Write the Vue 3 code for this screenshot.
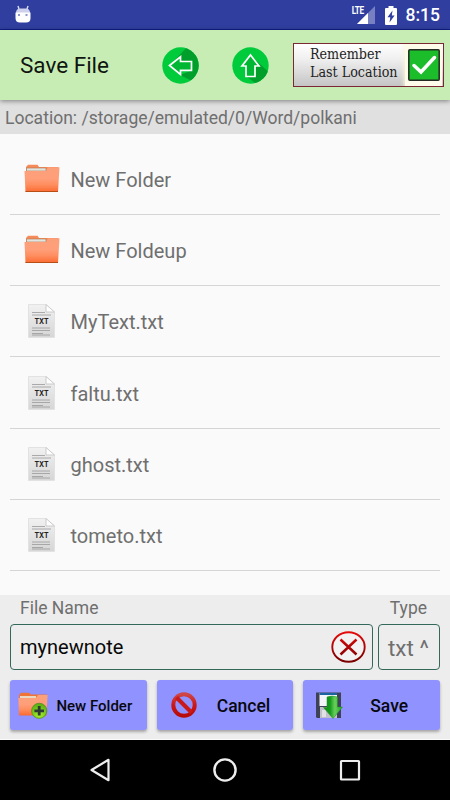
<script setup>
const files = [
  { name: 'New Folder', folder: true },
  { name: 'New Foldeup', folder: true },
  { name: 'MyText.txt' },
  { name: 'faltu.txt' },
  { name: 'ghost.txt' },
  { name: 'tometo.txt' }
]
</script>

<template>
  <div class="screen">
    <svg class="defs" width="0" height="0" aria-hidden="true">
      <defs>
        <linearGradient id="folderFill" x1="0" y1="0" x2="0" y2="1">
          <stop offset="0" stop-color="#fba07a" /><stop offset=".45" stop-color="#ff9f7a" />
          <stop offset=".7" stop-color="#ff8e60" /><stop offset="1" stop-color="#fb6a30" />
        </linearGradient>
        <linearGradient id="paper" x1="0" y1="0" x2="0" y2="1">
          <stop offset="0" stop-color="#f1f1f1" /><stop offset="1" stop-color="#d6d6d6" />
        </linearGradient>
        <linearGradient id="redRing" gradientUnits="userSpaceOnUse" x1="0" y1="1" x2="0" y2="31">
          <stop offset="0" stop-color="#e60a0a" /><stop offset="1" stop-color="#780000" />
        </linearGradient>
        <linearGradient id="banFill" x1="0" y1="0" x2="0" y2="1">
          <stop offset="0" stop-color="#cf4545" /><stop offset=".5" stop-color="#cc1717" /><stop offset="1" stop-color="#b80b0b" />
        </linearGradient>
        <linearGradient id="saveArrow" x1="0" y1="0" x2="1" y2="0">
          <stop offset="0" stop-color="#0c8a16" /><stop offset=".35" stop-color="#149b1c" />
          <stop offset=".6" stop-color="#69d05c" /><stop offset="1" stop-color="#18a51e" />
        </linearGradient>
        <radialGradient id="plusFill" cx=".5" cy=".8" r=".75">
          <stop offset="0" stop-color="#a6f02a" /><stop offset="1" stop-color="#59ae12" />
        </radialGradient>
        <clipPath id="disc"><circle cx="18.5" cy="18.5" r="18.2" /></clipPath>
      </defs>
    </svg>

    <header class="status">
      <svg class="droid" width="16" height="18" viewBox="0 0 16 18">
        <path d="M3 1 4 4M13 1 12 4" stroke="#d9dcf0" stroke-width="1.4" />
        <path d="M1 8Q1 3.5 5 3.5H11Q15 3.5 15 8Z" fill="#cdd1ec" />
        <path d="M.5 7.5H15.5V13Q15.5 17.5 11 17.5H5Q.5 17.5 .5 13Z" fill="#fff" />
        <path d="M3 9H5V11H3ZM10.500 9H12.500V11H10.500Z" fill="#8c95cc" />
      </svg>
      <div class="indicators">
        <span class="lte">LTE</span>
        <svg class="signal" width="18" height="18" viewBox="0 0 18 18">
          <path d="M0 18 18 0V18Z" fill="#7781c1" /><path d="M0 18 11 7V18Z" fill="#fff" />
        </svg>
        <svg class="battery" width="12" height="19" viewBox="0 0 12 19">
          <path d="M3.500 0H8.500V2H11Q12 2 12 3V18Q12 19 11 19H1Q0 19 0 18V3Q0 2 1 2H3.500Z" fill="#fff" />
          <path d="M7.500 4.500 2.500 11.200H5.300L4.500 16.500 9.600 9.500H6.800Z" fill="#303f9f" />
        </svg>
        <span class="clock">8:15</span>
      </div>
    </header>

    <div class="appbar">
      <h1>Save File</h1>
      <svg class="round back" width="37" height="37" viewBox="0 0 37 37">
        <circle cx="18.500" cy="18.500" r="18.200" fill="#00cb3b" />
        <path clip-path="url(#disc)" d="M10 16 26-1 45 10 30 34 18 28 29.500 23.500Z" fill="#009f2c" />
        <path d="M7.500 18.500 18.500 9.800V14.500H29.500V23.300H18.500V27.500Z" fill="#00b733" stroke="#fff" stroke-width="1.700" />
      </svg>
      <svg class="round up" width="37" height="37" viewBox="0 0 37 37">
        <circle cx="18.500" cy="18.500" r="18.200" fill="#00cb3b" />
        <path clip-path="url(#disc)" d="M18 8 40 28 28 40 14 29Z" fill="#009f2c" />
        <path d="M18.500 8 27 19H23V29.500H14V19H10Z" fill="#00b733" stroke="#fff" stroke-width="1.700" />
      </svg>
      <label class="remember">
        <span class="remember-text">Remember<br>Last Location</span>
        <span class="check">
          <svg width="32" height="32" viewBox="0 0 32 32">
            <rect x=".8" y=".8" width="30.400" height="30.400" rx="1" fill="#1bbd2b" stroke="#242b24" stroke-width="1.500" />
            <path d="M6 16.500 13 23 26.500 8.500" fill="none" stroke="#fff" stroke-width="3.500" stroke-linecap="round" />
          </svg>
        </span>
      </label>
    </div>

    <div class="location">Location: /storage/emulated/0/Word/polkani</div>

    <main class="list">
      <div v-for="f in files" :key="f.name" class="row">
        <div class="icon">
          <svg v-if="f.folder" width="36" height="29" viewBox="0 0 36 29">
            <path d="M2 11V3L4 .8H13.500L15 3H34V11Z" fill="#f58b5b" />
            <path d="M2.500 4H22V7H2.500Z" fill="#e2e4df" stroke="#a9754f" stroke-width=".6" />
            <path d="M.5 7H22L24 3.300H35.500L34 28H1.500Z" fill="url(#folderFill)" />
            <path d="M1.500 27.500H34" stroke="#b94d16" />
          </svg>
          <svg v-else width="27" height="34" viewBox="0 0 27 34">
            <path d="M.5.500H18L26.500 8V33.500H.5Z" fill="url(#paper)" stroke="#e2e2e2" />
            <path d="M18 .5V8H26.500Z" fill="#fff" stroke="#cacaca" />
            <path d="M4 8.500H17M4 11H23M4 24H22M4 26.500H22M4 29.500H15M4 31H22" stroke="#999" stroke-width=".8" />
            <text x="6.500" y="19.700" textLength="14" lengthAdjust="spacingAndGlyphs">TXT</text>
          </svg>
        </div>
        <span>{{ f.name }}</span>
      </div>
    </main>

    <section class="panel">
      <div class="labels"><span>File Name</span><span class="type-label">Type</span></div>
      <div class="fields">
        <div class="field">
          <span>mynewnote</span>
          <svg width="35" height="32" viewBox="0 0 35 32">
            <ellipse cx="17.500" cy="16" rx="16.200" ry="14.800" fill="#f2f2f2" stroke="url(#redRing)" stroke-width="1.900" />
            <path d="M9.500 8.500 25.500 23.500M25.500 8.500 9.500 23.500" stroke="url(#redRing)" stroke-width="2.500" />
          </svg>
        </div>
        <div class="type">txt ^</div>
      </div>
      <div class="actions">
        <button class="small">
          <svg class="i-new" width="30" height="27" viewBox="0 0 30 27">
            <path d="M1 10V3L3 .8H11L13 2.500H29V10Z" fill="#ef7435" />
            <path d="M2 4H18V6H2Z" fill="#ebd6bf" />
            <path d="M.3 6H18L20 3H29.600L28.500 23.500H1Z" fill="url(#folderFill)" />
            <circle cx="21.200" cy="18.800" r="7.600" fill="url(#plusFill)" stroke="#4f861c" stroke-width=".7" />
            <path d="M21.200 14V23.600M16.400 18.800H26" stroke="#303a35" stroke-width="2.800" />
          </svg>
          <span>New Folder</span>
        </button>
        <button class="cancel">
          <svg class="i-ban" width="26" height="26" viewBox="0 0 26 26">
            <circle cx="13" cy="13" r="10.700" fill="none" stroke="url(#banFill)" stroke-width="4" />
            <path d="M5.500 5.500 20.500 20.500" stroke="#c91919" stroke-width="4" />
          </svg>
          <span>Cancel</span>
        </button>
        <button class="save">
          <svg class="i-save" width="28" height="27" viewBox="0 0 28 27">
            <path d="M1 .5H26V26H2L1 25Z" fill="#3f4257" />
            <path d="M4.500 1H22V14H4.500Z" fill="#f3f5f8" /><path d="M4.500 1H22V3H4.500Z" fill="#1865a0" />
            <path d="M5 15H22V26H5Z" fill="#bfc0c8" /><path d="M7 18H11V25H7Z" fill="#e1e1e6" />
            <path d="M12 5Q17 3 22.500 5V15H27.500L18 26.500 8.500 15.500H12Z" fill="url(#saveArrow)" stroke="#238b29" stroke-width=".5" />
          </svg>
          <span>Save</span>
        </button>
      </div>
    </section>

    <nav class="nav">
      <svg width="24" height="26" viewBox="0 0 24 26"><path d="M3.500 13 20.500 2.800V23.200Z" fill="none" stroke="#eee" stroke-width="2.200" stroke-linejoin="round" /></svg>
      <svg width="24" height="26" viewBox="0 0 24 26"><circle cx="12" cy="13" r="10.600" fill="none" stroke="#eee" stroke-width="2.400" /></svg>
      <svg width="24" height="26" viewBox="0 0 24 26"><rect x="3" y="4" width="18" height="18.500" rx=".5" fill="none" stroke="#eee" stroke-width="2.200" /></svg>
    </nav>
  </div>
</template>

<style>
body { margin: 0; }
</style>

<style scoped>
* { box-sizing: border-box; }
svg { display: block; flex: none; }
.defs { width: 0; height: 0; }
.screen { width: 450px; height: 800px; display: flex; flex-direction: column; overflow: hidden; background: #fafafa; color: #6f6f6f; font-family: Roboto, sans-serif; white-space: nowrap; }
.status { height: 30px; flex: none; background: #303f9f; border-bottom: 1px solid #10208a; display: flex; justify-content: space-between; padding: 0 10px 0 15px; color: #fff; }
.droid { margin-top: 5px; }
.indicators { display: flex; }
.lte { font: 700 10px/10px Roboto, sans-serif; letter-spacing: -.5px; margin-top: 6px; transform: scaleX(.82); transform-origin: right; }
.signal { margin: 6px 10px 0 -7px; }
.battery { margin: 6px 9px 0 0; }
.clock { font-size: 17.500px; font-weight: 500; line-height: 31px; }
.appbar { height: 70px; flex: none; background: #c8edb4; display: flex; padding-left: 20px; box-shadow: 0 1px 5px rgba(0,0,0,.45); z-index: 1; }
h1 { margin: 0; width: 142px; flex: none; font-size: 22.500px; font-weight: 400; line-height: 71px; color: #101510; }
.round { margin-top: 16.500px; }
.up { margin-left: 33px; }
.remember { margin: 13px 0 0 24px; width: 151px; flex: none; height: 44px; border: 1px solid #792834; background: linear-gradient(#fff, #f0f0f0 35%, #c5c5c5); display: flex; }
.remember-text { font: 14.150px/18px "DejaVu Serif Condensed", "DejaVu Serif", serif; font-stretch: condensed; color: #222; margin: 1px 0 0 16px; width: 95px; flex: none; }
.check { width: 37px; flex: none; display: flex; align-items: center; justify-content: center; background: #fffbea; box-shadow: 0 0 4px 1px #fff6d8; clip-path: inset(0 0 0 -5px); }
.location { height: 34px; flex: none; background: #e0e0e0; font-size: 17.550px; line-height: 36px; padding-left: 5px; }
.list { height: 461px; flex: none; padding: 9.500px 10px 0; }
.row { height: 71.300px; border-bottom: 1px solid #d5d5d5; display: flex; align-items: center; font-size: 20px; padding-top: 2px; }
.icon { width: 60.500px; padding-left: 14px; display: flex; margin-top: -2px; }
.icon svg[width="27"] { margin-left: 4px; }
.icon text { font: 700 7px Inter, sans-serif; fill: #222; }
.panel { height: 144px; flex: none; background: #ededed; padding: 0 10px; }
.labels { height: 29px; display: flex; justify-content: space-between; padding: 0 13px 0 10px; font-size: 17.500px; line-height: 26px; }
.fields { display: flex; justify-content: space-between; height: 46px; }
.field, .type { border: 1px solid #33685b; border-radius: 4px; }
.field { width: 362.500px; display: flex; align-items: center; justify-content: space-between; padding: 0 6px 0 9px; color: #080808; font-size: 20px; }
.field svg { margin-top: -1px; }
.type { width: 62px; padding-left: 9px; font-size: 22.500px; line-height: 46px; }
.actions { display: flex; gap: 10px; margin-top: 10px; }
button { flex: 1; height: 50px; border: 0; border-radius: 3px; background: #8f92ff; box-shadow: 0 2px 3px rgba(0,0,0,.3); padding: 0; display: flex; align-items: center; font: 500 17.500px Roboto, sans-serif; color: #08080e; }
button span { flex: 1; text-align: center; padding-top: 1px; }
.small { font-size: 15px; }
.i-new { margin-left: 8px; }
.small span { padding-right: 6px; }
.cancel span { padding-right: 3px; }
.save span { padding-right: 5px; }
.i-ban { margin-left: 14px; }
.i-save { margin-left: 12px; margin-top: 1px; }
.nav { height: 60px; margin-top: 1px; flex: none; background: #000; display: flex; justify-content: space-between; padding: 17px 88px 0 88px; }
</style>
